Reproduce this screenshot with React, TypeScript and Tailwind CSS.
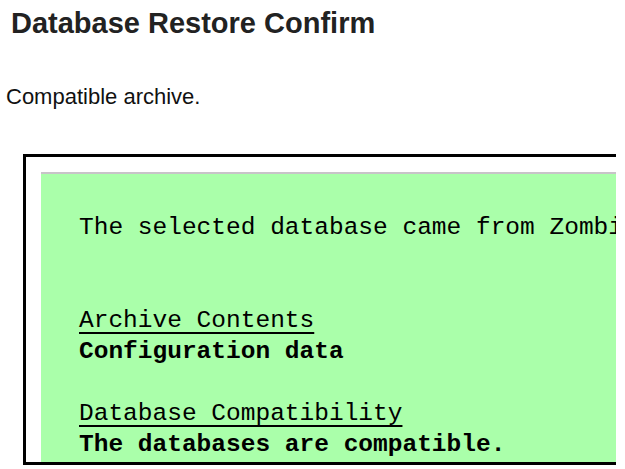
const LINES: { text: string; kind: 'plain' | 'label' | 'value' | 'blank' }[] = [
  { text: 'The selected database came from Zombie', kind: 'plain' },
  { text: '', kind: 'blank' },
  { text: '', kind: 'blank' },
  { text: 'Archive Contents', kind: 'label' },
  { text: 'Configuration data', kind: 'value' },
  { text: '', kind: 'blank' },
  { text: 'Database Compatibility', kind: 'label' },
  { text: 'The databases are compatible.', kind: 'value' },
];

export default function App() {
  return (
    <div className="w-[625px] h-[469px] bg-white overflow-hidden">
      <h1
        className="pt-[6px] pl-[11px] text-[29px] leading-[34px] font-bold text-[#222]"
        style={{ fontFamily: '"Liberation Sans", Arial, sans-serif' }}
      >
        Database Restore Confirm
      </h1>

      <p
        className="mt-[44px] pl-[6px] text-[22px] leading-[26px] text-[#111]"
        style={{ fontFamily: '"Liberation Sans", Arial, sans-serif' }}
      >
        Compatible archive.
      </p>

      {/* restore report frame, clipped on the right like the page */}
      <div className="mt-[44px] w-[616px] overflow-hidden">
        <div className="ml-[23px] w-[700px] h-[311px] border-[3px] border-black overflow-hidden pt-[15px] pl-[15px]">
          <div className="bg-[#aaffaa] border-t-2 border-[#c8c4c8] h-[400px] pt-[38px] pl-[38px]">
            {LINES.map((line, i) => (
              <div
                key={i}
                className={
                  'h-[31px] text-[24.5px] leading-[31px] text-black whitespace-pre ' +
                  (line.kind === 'value' ? 'font-bold' : 'font-normal')
                }
                style={{ fontFamily: '"Liberation Mono", "Courier New", monospace' }}
              >
                {line.kind === 'label' ? (
                  <span className="underline decoration-2 underline-offset-[5px]">{line.text}</span>
                ) : (
                  line.text
                )}
              </div>
            ))}
          </div>
        </div>
      </div>
    </div>
  );
}
